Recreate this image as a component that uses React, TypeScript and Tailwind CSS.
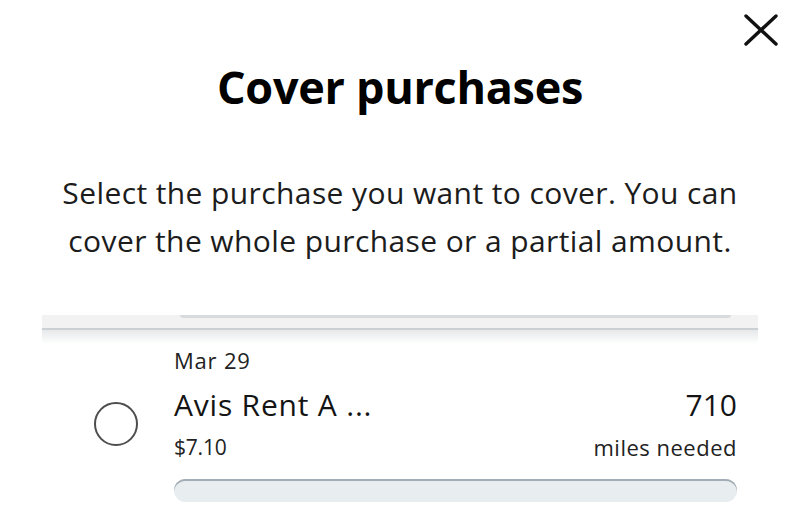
import React from 'react';

const font = { fontFamily: '"Open Sans", "Noto Sans", sans-serif' };

export default function App() {
  return (
    <div className="relative w-[800px] h-[505px] bg-white overflow-hidden text-[#141414]" style={font}>
      <button className="absolute top-[14px] right-[22px] w-[34px] h-[32px]" aria-label="Close">
        <svg viewBox="0 0 34 32" width="34" height="32">
          <path d="M2 2 L32 30 M32 2 L2 30" stroke="#111" strokeWidth="3.4" strokeLinecap="round" fill="none" />
        </svg>
      </button>

      <h1 className="pt-[61px] text-center text-[45px] leading-[52px] font-bold tracking-[-0.3px] text-black">
        Cover purchases
      </h1>

      <p className="mt-[56px] text-center text-[30px] leading-[48px] tracking-[0.4px] text-[#1c1c1c]">
        Select the purchase you want to cover. You can
        <br />
        cover the whole purchase or a partial amount.
      </p>

      <div className="mt-[50px] mx-[42px]">
        <div className="h-[13px] bg-[#f2f2f2]">
          <div className="ml-[138px] mr-[27px] h-[3px] rounded-b-md bg-[#d7dbde]" />
        </div>
        <div className="h-[2px] bg-[#cbd0d4]" />
        <div className="h-[14px] bg-gradient-to-b from-[#e6e8ea] to-white" />
      </div>

      <div className="mt-[2px] pl-[94px] pr-[63px] grid grid-cols-[44px_1fr] gap-x-[36px]">
        <div />
        <div className="text-[22px] leading-[28px] tracking-[0.8px] text-[#222]">Mar 29</div>

        <div className="self-center mt-[13px]">
          <div className="w-[44px] h-[44px] rounded-full border-2 border-[#4d4d4d]" />
        </div>
        <div className="mt-[13px] flex justify-between">
          <div>
            <div className="text-[30px] leading-[36px] tracking-[0.8px] text-[#141414]">Avis Rent A ...</div>
            <div className="mt-[10px] text-[21px] leading-[28px] tracking-[-0.2px] text-[#222]">$7.10</div>
          </div>
          <div className="text-right">
            <div className="text-[30px] leading-[36px] text-[#141414]">710</div>
            <div className="mt-[10px] text-[22px] leading-[28px] tracking-[0.5px] text-[#222]">miles needed</div>
          </div>
        </div>

        <div />
        <div className="mt-[18px] h-[23px] rounded-full bg-[#e8edf0] shadow-[inset_0_2px_0_#a3adb6]" />
      </div>
    </div>
  );
}
